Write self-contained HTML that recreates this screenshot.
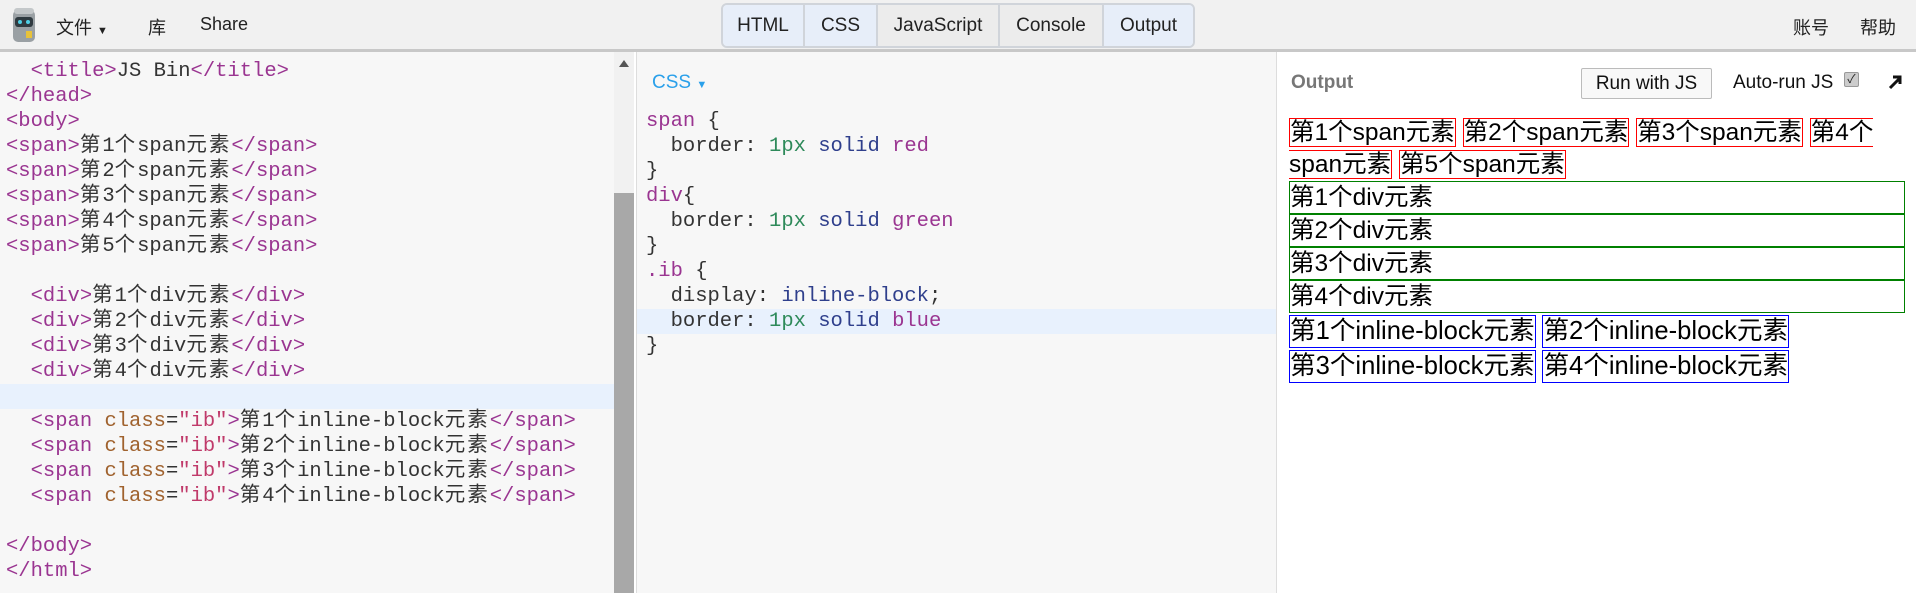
<!DOCTYPE html>
<html><head><meta charset="utf-8"><style>
*{margin:0;padding:0;box-sizing:border-box}
body{width:1916px;height:593px;overflow:hidden;background:#fff;font-family:"Liberation Sans","Noto Sans CJK SC",sans-serif;position:relative}
#hdr{position:absolute;left:0;top:0;width:1916px;height:52px;background:#f1f1f1;border-bottom:3px solid #c8c8c8}
.hl{position:absolute;top:14px;font-size:18px;color:#222}
#tabs{position:absolute;left:721px;top:3px;height:45px;display:flex;border:2px solid #d0d4da;border-radius:6px;overflow:hidden}
#tabs div{height:100%;font-size:19px;line-height:41px;text-align:center;border-right:2px solid #d0d4da;color:#222}
#tabs div:last-child{border-right:none}
.on{background:#e7eef9}.off{background:#ececec}
.pane{position:absolute;top:52px;height:541px}
#ph{left:0;width:614px;background:#f7f7f7}
#sb{position:absolute;left:614px;top:52px;width:20px;height:541px;background:#f1f1f1}
#sb .th{position:absolute;left:0;top:141px;width:20px;height:400px;background:#a8a8a8}
#pc{left:636px;width:640px;background:#f7f7f7;border-left:1px solid #ddd}
#po{left:1276px;width:640px;background:#fff;border-left:1px solid #ddd}
.code{position:absolute;font-family:"Liberation Mono","Noto Sans CJK SC",monospace;font-size:20.5px;line-height:25px;color:#333;white-space:pre}
.c{letter-spacing:2px}
.t{color:#9a3591}.a{color:#a0622e}.s{color:#c03a6a}.n{color:#2e8a5a}.k{color:#2f3f8c}.p{color:#9a3591}
.hlt{position:absolute;height:25px;background:#e8f1fd}
#out{position:absolute;left:12px;top:65px;width:616px;font-size:24.5px;line-height:32px;color:#000}
#out span.r{border:1px solid red}
#out div{border:1px solid green;height:33px;line-height:31px}
#out .ib{display:inline-block;border:1px solid blue;line-height:31px;margin-top:2px;font-size:25.6px}
</style></head><body>
<div id="hdr">
<svg style="position:absolute;left:10px;top:6px" width="28" height="38" viewBox="0 0 28 38"><rect x="3" y="4" width="22" height="32" rx="5" fill="#9aa0a4"/><rect x="4" y="2" width="20" height="6" rx="3" fill="#c4c8ca"/><rect x="5" y="11" width="18" height="10" rx="3" fill="#2f3a40"/><circle cx="10" cy="16" r="2" fill="#4fd0e6"/><circle cx="18" cy="16" r="2" fill="#4fd0e6"/><rect x="16" y="25" width="6" height="7" fill="#e8c23a"/></svg>
<span class="hl" style="left:56px">文件 <span style="font-size:11px">▼</span></span>
<span class="hl" style="left:148px">库</span>
<span class="hl" style="left:200px">Share</span>
<span class="hl" style="left:1793px">账号</span>
<span class="hl" style="left:1860px">帮助</span>
<div id="tabs">
<div class="on" style="width:82px">HTML</div><div class="on" style="width:73px">CSS</div><div class="off" style="width:122px">JavaScript</div><div class="off" style="width:104px">Console</div><div class="on" style="width:89px">Output</div>
</div>
</div>
<div class="pane" id="ph"><div class="hlt" style="left:0;top:332px;width:614px"></div></div>
<div id="sb"><div style="position:absolute;left:5px;top:8px;width:0;height:0;border-left:5px solid transparent;border-right:5px solid transparent;border-bottom:7px solid #555"></div><div class="th"></div></div>
<div class="code" style="left:6px;top:59px"><span class="t">  &lt;title&gt;</span>JS Bin<span class="t">&lt;/title&gt;</span>
<span class="t">&lt;/head&gt;</span>
<span class="t">&lt;body&gt;</span>
<span class="t">&lt;span&gt;</span><span class="c">第</span>1<span class="c">个</span>span<span class="c">元素</span><span class="t">&lt;/span&gt;</span>
<span class="t">&lt;span&gt;</span><span class="c">第</span>2<span class="c">个</span>span<span class="c">元素</span><span class="t">&lt;/span&gt;</span>
<span class="t">&lt;span&gt;</span><span class="c">第</span>3<span class="c">个</span>span<span class="c">元素</span><span class="t">&lt;/span&gt;</span>
<span class="t">&lt;span&gt;</span><span class="c">第</span>4<span class="c">个</span>span<span class="c">元素</span><span class="t">&lt;/span&gt;</span>
<span class="t">&lt;span&gt;</span><span class="c">第</span>5<span class="c">个</span>span<span class="c">元素</span><span class="t">&lt;/span&gt;</span>

  <span class="t">&lt;div&gt;</span><span class="c">第</span>1<span class="c">个</span>div<span class="c">元素</span><span class="t">&lt;/div&gt;</span>
  <span class="t">&lt;div&gt;</span><span class="c">第</span>2<span class="c">个</span>div<span class="c">元素</span><span class="t">&lt;/div&gt;</span>
  <span class="t">&lt;div&gt;</span><span class="c">第</span>3<span class="c">个</span>div<span class="c">元素</span><span class="t">&lt;/div&gt;</span>
  <span class="t">&lt;div&gt;</span><span class="c">第</span>4<span class="c">个</span>div<span class="c">元素</span><span class="t">&lt;/div&gt;</span>

  <span class="t">&lt;span</span> <span class="a">class</span>=<span class="s">"ib"</span><span class="t">&gt;</span><span class="c">第</span>1<span class="c">个</span>inline-block<span class="c">元素</span><span class="t">&lt;/span&gt;</span>
  <span class="t">&lt;span</span> <span class="a">class</span>=<span class="s">"ib"</span><span class="t">&gt;</span><span class="c">第</span>2<span class="c">个</span>inline-block<span class="c">元素</span><span class="t">&lt;/span&gt;</span>
  <span class="t">&lt;span</span> <span class="a">class</span>=<span class="s">"ib"</span><span class="t">&gt;</span><span class="c">第</span>3<span class="c">个</span>inline-block<span class="c">元素</span><span class="t">&lt;/span&gt;</span>
  <span class="t">&lt;span</span> <span class="a">class</span>=<span class="s">"ib"</span><span class="t">&gt;</span><span class="c">第</span>4<span class="c">个</span>inline-block<span class="c">元素</span><span class="t">&lt;/span&gt;</span>

<span class="t">&lt;/body&gt;</span>
<span class="t">&lt;/html&gt;</span></div>
<div class="pane" id="pc"><div class="hlt" style="left:0;top:257px;width:639px"></div>
<div style="position:absolute;left:15px;top:20px;font-size:19px;color:#2aa0ea">CSS <span style="font-size:11px">▼</span></div></div>
<div class="code" style="left:646px;top:109px"><span class="p">span</span> {
  border: <span class="n">1px</span> <span class="k">solid</span> <span class="p">red</span>
}
<span class="p">div</span>{
  border: <span class="n">1px</span> <span class="k">solid</span> <span class="p">green</span>
}
<span class="p">.ib</span> {
  display: <span class="k">inline-block</span>;
  border: <span class="n">1px</span> <span class="k">solid</span> <span class="p">blue</span>
}</div>
<div class="pane" id="po">
<div style="position:absolute;left:14px;top:20px;font-size:19px;font-weight:bold;color:#777">Output</div>
<div style="position:absolute;left:304px;top:16px;width:131px;height:31px;border:1px solid #bbb;border-radius:2px;background:#f8f8f8;font-size:19px;line-height:29px;text-align:center;color:#111">Run with JS</div>
<div style="position:absolute;left:456px;top:20px;font-size:19px;color:#111">Auto-run JS</div>
<div style="position:absolute;left:567px;top:20px;width:15px;height:15px;border:1px solid #999;border-radius:2px;background:#ccc;font-size:12px;line-height:13px;text-align:center;color:#222">✓</div>
<svg style="position:absolute;left:610px;top:22px" width="16" height="16" viewBox="0 0 16 16"><path d="M3 14 L13 4 M6 3 H13 V10" stroke="#111" stroke-width="3" fill="none"/></svg>
<div id="out"><span class="r">第1个span元素</span> <span class="r">第2个span元素</span> <span class="r">第3个span元素</span> <span class="r">第4个span元素</span> <span class="r">第5个span元素</span>
<div>第1个div元素</div><div>第2个div元素</div><div>第3个div元素</div><div>第4个div元素</div>
<span class="ib">第1个inline-block元素</span> <span class="ib">第2个inline-block元素</span><br><span class="ib">第3个inline-block元素</span> <span class="ib">第4个inline-block元素</span></div>
</div>
</body></html>
